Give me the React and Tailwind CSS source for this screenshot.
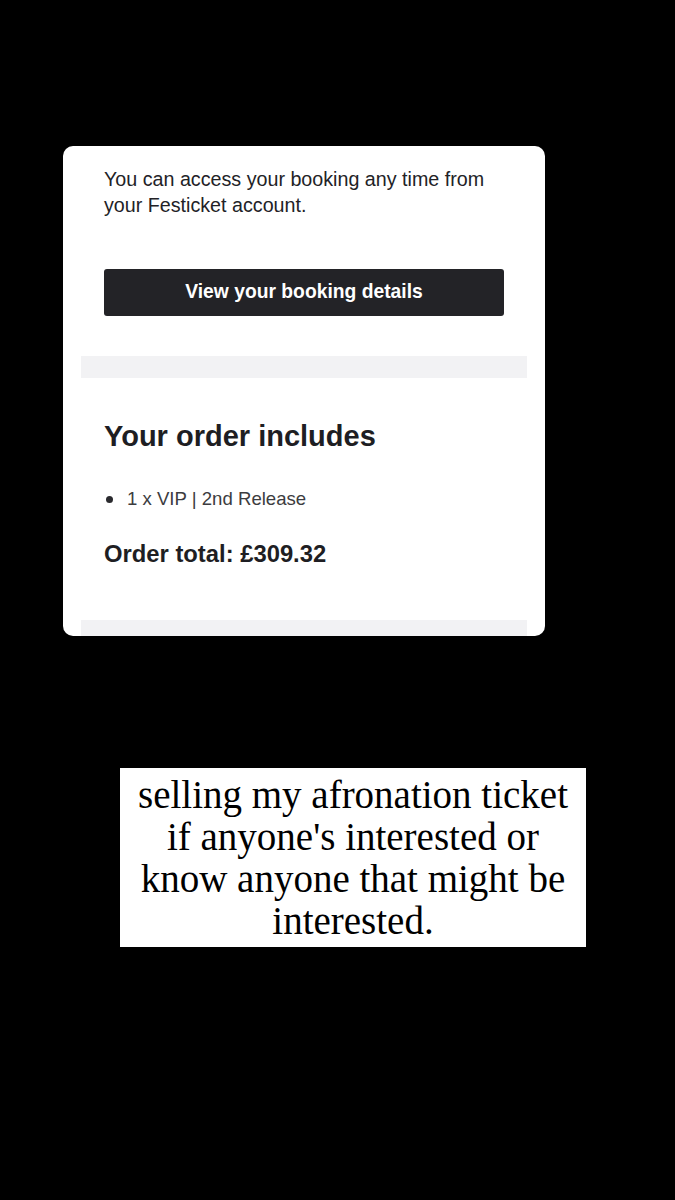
export default function App() {
  return (
    <div className="min-h-[1200px] w-full bg-black font-['Liberation_Sans',Arial,sans-serif]">
      <div className="pt-[146px] pl-[63px]">
        <div className="w-[482px] h-[490px] overflow-hidden rounded-[10px] bg-white">
          <div className="px-[41px] pt-[20px]">
            <p className="text-[19.7px] leading-[26px] text-[#222226]">
              You can access your booking any time from your Festicket account.
            </p>
            <button className="mt-[51px] flex h-[47px] w-[400px] items-center justify-center rounded-[3px] bg-[#232327] text-[19.3px] font-bold text-white">
              View your booking details
            </button>
          </div>
          <div className="mx-[18px] mt-[40px] h-[22px] bg-[#f2f2f4]" />
          <div className="px-[41px] pt-[41px]">
            <h2 className="text-[29px] font-bold leading-[34px] text-[#1e1e23]">Your order includes</h2>
            <ul className="mt-[34px]">
              <li className="flex items-center text-[18.6px] leading-[24px] text-[#3c3c40]">
                <span className="ml-[2px] mr-[14px] h-[7px] w-[7px] rounded-full bg-[#2a2a2e]" />
                1 x VIP | 2nd Release
              </li>
            </ul>
            <p className="mt-[29px] text-[23.8px] font-bold leading-[28px] text-[#1e1e23]">
              Order total: £309.32
            </p>
          </div>
          <div className="mx-[18px] mt-[52px] h-[22px] bg-[#f2f2f4]" />
        </div>
      </div>
      <div className="pt-[132px] pl-[120px]">
        <div className="flex h-[179px] w-[466px] items-center justify-center bg-white px-[6px]">
          <p className="text-center font-['Liberation_Serif','Times_New_Roman',serif] text-[39px] leading-[42px] text-black">
            selling my afronation ticket
            <br />
            if anyone's interested or
            <br />
            know anyone that might be
            <br />
            interested.
          </p>
        </div>
      </div>
    </div>
  );
}
